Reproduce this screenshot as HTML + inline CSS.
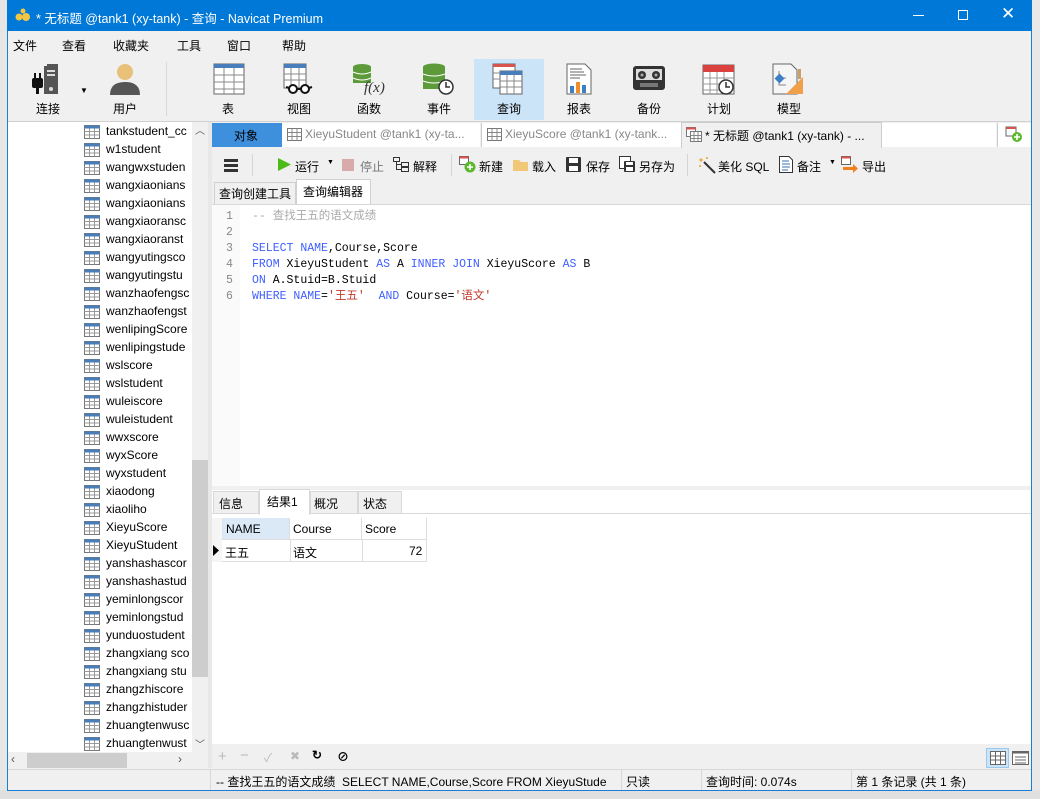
<!DOCTYPE html>
<html><head><meta charset="utf-8"><style>
*{margin:0;padding:0;box-sizing:border-box}
body{width:1040px;height:799px;overflow:hidden;background:#d8d8d8;font-family:"Liberation Sans","Noto Sans CJK SC",sans-serif;font-size:12px;color:#000;position:relative}
.a{position:absolute}
.ti{position:absolute;white-space:nowrap}
.tb{position:absolute;top:100px;width:70px;text-align:center;font-size:12px}
.ico{position:absolute}
.li{position:absolute;left:84px;height:18px;white-space:nowrap;font-size:12px}
.li svg{position:absolute;left:0;top:2px}
.li span{position:absolute;left:22px;top:1px}
.mono{font-family:"Liberation Mono","Noto Sans CJK SC",monospace;font-size:11.5px}
.k{color:#3f5fff}
.s{color:#c0392b}
</style></head><body>
<!-- outside bg strips -->
<div class="a" style="left:0;top:0;width:7px;height:799px;background:#e6e6e6"></div>
<div class="a" style="left:1032px;top:0;width:8px;height:799px;background:#e8e8e8"></div>
<div class="a" style="left:0;top:790px;width:1040px;height:9px;background:#e0e0e0"></div>
<!-- window -->
<div class="a" style="left:7px;top:0;width:1025px;height:791px;background:#f0f0f0;border:1px solid #1a7fd4"></div>
<div class="a" style="left:7px;top:0;width:1025px;height:31px;background:#0078d7"></div>
<svg class="ico" style="left:15px;top:8px" width="16" height="14"><circle cx="4" cy="9" r="3.5" fill="#f4c542"/><circle cx="11" cy="9" r="4" fill="#f4c542"/><circle cx="8" cy="3" r="2.5" fill="#f4c542"/></svg>
<div class="ti" style="left:36px;top:8px;color:#fff;font-size:12.5px">* 无标题 @tank1 (xy-tank) - 查询 - Navicat Premium</div>
<div class="a" style="left:913px;top:15px;width:11px;height:1px;background:#fff"></div>
<div class="a" style="left:958px;top:10px;width:10px;height:10px;border:1px solid #fff"></div>
<div class="ti" style="left:1001px;top:4px;color:#fff;font-size:17px">✕</div>
<!-- menu -->
<div class="ti" style="left:13px;top:37px">文件</div>
<div class="ti" style="left:62px;top:37px">查看</div>
<div class="ti" style="left:113px;top:37px">收藏夹</div>
<div class="ti" style="left:177px;top:37px">工具</div>
<div class="ti" style="left:227px;top:37px">窗口</div>
<div class="ti" style="left:282px;top:37px">帮助</div>
<!-- toolbar -->
<div class="a" style="left:474px;top:59px;width:70px;height:61px;background:#cce4f7"></div>
<div class="a" style="left:166px;top:62px;width:1px;height:54px;background:#d8d8d8"></div>
<svg class="ico" style="left:30px;top:62px" width="32" height="34"><rect x="14" y="4" width="14" height="28" fill="#555"/><rect x="17" y="2" width="11" height="2" fill="#555"/><rect x="17" y="8" width="8" height="2" fill="#ddd"/><rect x="17" y="12" width="8" height="2" fill="#ddd"/><circle cx="21" cy="27" r="2" fill="#ddd"/><rect x="2" y="16" width="11" height="10" rx="2" fill="#111"/><rect x="4" y="11" width="2" height="5" fill="#111"/><rect x="9" y="11" width="2" height="5" fill="#111"/><rect x="6" y="26" width="3" height="6" fill="#111"/></svg>
<div class="ti" style="left:80px;top:86px;font-size:8px">▼</div>
<div class="tb" style="left:13px">连接</div>
<svg class="ico" style="left:108px;top:62px" width="34" height="34"><circle cx="17" cy="10" r="8" fill="#e8c07a"/><path d="M2 33 Q2 20 17 20 Q32 20 32 33Z" fill="#555"/></svg>
<div class="tb" style="left:90px">用户</div>
<svg class="ico" style="left:213px;top:63px" width="32" height="32"><rect x="1" y="1" width="30" height="30" fill="#fff" stroke="#666"/><rect x="1" y="1" width="30" height="4" fill="#4a7ebb"/><path d="M1 12H31M1 19H31M1 26H31M11 5V31M21 5V31" stroke="#888"/></svg>
<div class="tb" style="left:193px">表</div>
<svg class="ico" style="left:283px;top:63px" width="32" height="32"><rect x="1" y="1" width="22" height="24" fill="#fff" stroke="#666"/><rect x="1" y="1" width="22" height="4" fill="#4a7ebb"/><path d="M1 11H23M1 17H23M8 5V25M16 5V25" stroke="#888"/><circle cx="10" cy="26" r="4" fill="#fff" stroke="#111" stroke-width="2"/><circle cx="22" cy="26" r="4" fill="#fff" stroke="#111" stroke-width="2"/><path d="M14 26H18M3 24L6 25M29 24L26 25" stroke="#111" stroke-width="2"/></svg>
<div class="tb" style="left:264px">视图</div>
<svg class="ico" style="left:352px;top:63px" width="34" height="32"><ellipse cx="10" cy="4" rx="9" ry="3" fill="#5d9b3a"/><rect x="1" y="4" width="18" height="16" fill="#5d9b3a"/><path d="M1 9Q10 13 19 9M1 15Q10 19 19 15" stroke="#fff" fill="none"/><text x="12" y="29" font-family="Liberation Serif" font-style="italic" font-size="15" fill="#333">f(x)</text></svg>
<div class="tb" style="left:334px">函数</div>
<svg class="ico" style="left:422px;top:63px" width="34" height="32"><ellipse cx="12" cy="4" rx="11" ry="3.5" fill="#5d9b3a"/><rect x="1" y="4" width="22" height="22" fill="#5d9b3a"/><path d="M1 11Q12 15 23 11M1 18Q12 22 23 18" stroke="#fff" fill="none"/><circle cx="24" cy="24" r="7" fill="#fff" stroke="#333" stroke-width="1.5"/><path d="M24 19V24H28" stroke="#333" stroke-width="1.5" fill="none"/></svg>
<div class="tb" style="left:404px">事件</div>
<svg class="ico" style="left:492px;top:63px" width="32" height="32"><rect x="1" y="1" width="22" height="24" fill="#fff" stroke="#666"/><rect x="1" y="1" width="22" height="3" fill="#d9534f"/><rect x="8" y="8" width="22" height="23" fill="#fff" stroke="#666"/><rect x="8" y="8" width="22" height="4" fill="#4a7ebb"/><path d="M8 18H30M8 24H30M15 12V31M22 12V31M1 10H8M1 16H8" stroke="#888"/></svg>
<div class="tb" style="left:474px">查询</div>
<svg class="ico" style="left:566px;top:63px" width="26" height="32"><path d="M1 1H19L25 7V31H1Z" fill="#fff" stroke="#666"/><path d="M4 6H16M4 9H18M4 12H20M4 15H14" stroke="#666"/><rect x="4" y="23" width="4" height="7" fill="#3b7fc4"/><rect x="10" y="19" width="4" height="11" fill="#f08c2a"/><rect x="16" y="22" width="4" height="8" fill="#3b7fc4"/></svg>
<div class="tb" style="left:544px">报表</div>
<svg class="ico" style="left:632px;top:65px" width="34" height="26"><rect x="1" y="1" width="32" height="24" rx="3" fill="#333"/><rect x="4" y="4" width="26" height="11" fill="#ddd"/><circle cx="10" cy="10" r="4" fill="#333"/><circle cx="24" cy="10" r="4" fill="#333"/><circle cx="10" cy="10" r="1.5" fill="#aaa"/><circle cx="24" cy="10" r="1.5" fill="#aaa"/><rect x="8" y="18" width="18" height="4" fill="#777"/></svg>
<div class="tb" style="left:614px">备份</div>
<svg class="ico" style="left:702px;top:63px" width="34" height="32"><rect x="1" y="2" width="31" height="29" fill="#fff" stroke="#666"/><rect x="1" y="2" width="31" height="7" fill="#d9423e"/><path d="M1 15H32M1 21H32M1 27H32M8 9V31M15 9V31M22 9V31" stroke="#999"/><circle cx="24" cy="24" r="7" fill="#fff" stroke="#333" stroke-width="1.5"/><path d="M24 19V24H28" stroke="#333" stroke-width="1.5" fill="none"/></svg>
<div class="tb" style="left:684px">计划</div>
<svg class="ico" style="left:772px;top:63px" width="34" height="32"><path d="M1 1H19L25 7V31H1Z" fill="#f5f5f5" stroke="#666"/><path d="M7 8V22H14M7 15H14" stroke="#888" fill="none"/><rect x="4" y="12" width="7" height="7" transform="rotate(45 7.5 15.5)" fill="#3b7fc4"/><path d="M14 31L31 14V31Z" fill="#f0a04a"/><rect x="26" y="6" width="3" height="10" fill="#c9a06a"/></svg>
<div class="tb" style="left:754px">模型</div>
<div class="a" style="left:8px;top:121px;width:1023px;height:1px;background:#d0d0d0"></div>
<!-- left panel -->
<div class="a" style="left:8px;top:122px;width:200px;height:630px;background:#fff"></div>
<div class="a" style="left:192px;top:122px;width:16px;height:630px;background:#f0f0f0"></div>
<div class="a" style="left:192px;top:460px;width:16px;height:217px;background:#cdcdcd"></div>
<div class="ti" style="left:195px;top:122px;font-size:10px;color:#555">︿</div>
<div class="ti" style="left:195px;top:736px;font-size:10px;color:#555">﹀</div>
<div class="a" style="left:8px;top:752px;width:200px;height:17px;background:#f0f0f0"></div>
<div class="a" style="left:27px;top:753px;width:100px;height:15px;background:#cdcdcd"></div>
<div class="ti" style="left:11px;top:752px;color:#555">‹</div>
<div class="ti" style="left:178px;top:752px;color:#555">›</div>
<div class="a" style="left:8px;top:122px;width:184px;height:630px;overflow:hidden" id="lst"></div>
<!-- splitter -->
<div class="a" style="left:208px;top:122px;width:4px;height:646px;background:#e8e8e8"></div>
<!-- tab row -->
<div class="a" style="left:212px;top:122px;width:819px;height:26px;background:#f0f0f0"></div>
<div class="a" style="left:212px;top:123px;width:70px;height:24px;background:#3e8fdc"></div>
<div class="ti" style="left:234px;top:127px">对象</div>
<div class="a" style="left:282px;top:123px;width:198px;height:24px;background:#fff"></div>
<div class="ti" style="left:305px;top:127px;color:#888">XieyuStudent @tank1 (xy-ta...</div>
<div class="a" style="left:481px;top:123px;width:200px;height:24px;background:#fff;border-left:1px solid #ccc"></div>
<div class="ti" style="left:505px;top:127px;color:#888">XieyuScore @tank1 (xy-tank...</div>
<div class="a" style="left:681px;top:122px;width:201px;height:26px;background:#f0f0f0;border:1px solid #ccc;border-bottom:none"></div>
<div class="ti" style="left:705px;top:127px">* 无标题 @tank1 (xy-tank) - ...</div>
<div class="a" style="left:882px;top:123px;width:114px;height:24px;background:#fff"></div>
<div class="a" style="left:997px;top:123px;width:34px;height:24px;background:#fff;border-left:1px solid #ccc"></div>
<svg class="ico" style="left:1005px;top:126px" width="18" height="16"><rect x="1" y="1" width="10" height="9" fill="#fff" stroke="#666"/><rect x="1" y="1" width="10" height="2" fill="#d9534f"/><circle cx="12" cy="11" r="5" fill="#5cb82e"/><path d="M12 8V14M9 11H15" stroke="#fff" stroke-width="1.6"/></svg>
<!-- tab icons -->
<svg class="ico" style="left:287px;top:128px" width="15" height="13"><rect x=".5" y=".5" width="14" height="12" fill="#fff" stroke="#777"/><path d="M.5 4.5H14.5M.5 8.5H14.5M5 .5V12.5M10 .5V12.5" stroke="#888"/></svg>
<svg class="ico" style="left:487px;top:128px" width="15" height="13"><rect x=".5" y=".5" width="14" height="12" fill="#fff" stroke="#777"/><path d="M.5 4.5H14.5M.5 8.5H14.5M5 .5V12.5M10 .5V12.5" stroke="#888"/></svg>
<svg class="ico" style="left:686px;top:127px" width="16" height="15"><rect x=".5" y=".5" width="9" height="9" fill="#fff" stroke="#777"/><rect x=".5" y=".5" width="9" height="2" fill="#d9534f"/><rect x="4.5" y="4.5" width="11" height="10" fill="#fff" stroke="#777"/><path d="M4.5 8.5H15.5M4.5 11.5H15.5M8 4.5V14.5M12 4.5V14.5" stroke="#888"/></svg>
<!-- query toolbar -->
<div class="a" style="left:212px;top:148px;width:819px;height:57px;background:#f0f0f0"></div>
<div class="a" style="left:224px;top:159px;width:14px;height:2.5px;background:#333"></div>
<div class="a" style="left:224px;top:164px;width:14px;height:2.5px;background:#333"></div>
<div class="a" style="left:224px;top:169px;width:14px;height:2.5px;background:#333"></div>
<div class="a" style="left:252px;top:154px;width:1px;height:22px;background:#d5d5d5"></div>
<svg class="ico" style="left:278px;top:158px" width="13" height="13"><path d="M0 0L13 6.5L0 13Z" fill="#4cbb17"/></svg>
<div class="ti" style="left:295px;top:158px">运行</div>
<div class="ti" style="left:327px;top:159px;font-size:7px">▼</div>
<div class="a" style="left:342px;top:159px;width:12px;height:12px;background:#d9aaaa"></div>
<div class="ti" style="left:360px;top:158px;color:#777">停止</div>
<svg class="ico" style="left:393px;top:157px" width="16" height="15"><rect x=".5" y=".5" width="6" height="4" fill="none" stroke="#333"/><rect x="8.5" y="5.5" width="7" height="4" fill="none" stroke="#333"/><rect x="8.5" y="10.5" width="7" height="4" fill="none" stroke="#333"/><path d="M3.5 4.5V12.5H8.5M3.5 7.5H8.5" stroke="#333" fill="none"/></svg>
<div class="ti" style="left:413px;top:158px">解释</div>
<div class="a" style="left:451px;top:154px;width:1px;height:22px;background:#d5d5d5"></div>
<svg class="ico" style="left:459px;top:156px" width="18" height="17"><rect x=".5" y=".5" width="9" height="8" fill="#fff" stroke="#666"/><rect x=".5" y=".5" width="9" height="2" fill="#d9534f"/><circle cx="11" cy="11" r="5.5" fill="#5cb82e"/><path d="M11 8V14M8 11H14" stroke="#fff" stroke-width="1.6"/></svg>
<div class="ti" style="left:479px;top:158px">新建</div>
<svg class="ico" style="left:513px;top:158px" width="16" height="13"><path d="M0 2H6L8 4H15V13H0Z" fill="#f0c878"/></svg>
<div class="ti" style="left:532px;top:158px">载入</div>
<svg class="ico" style="left:566px;top:157px" width="15" height="15"><rect x="0" y="0" width="15" height="15" rx="1" fill="#333"/><rect x="3" y="1" width="9" height="5" fill="#fff"/><rect x="3" y="9" width="9" height="5" fill="#fff"/></svg>
<div class="ti" style="left:586px;top:158px">保存</div>
<svg class="ico" style="left:619px;top:156px" width="17" height="17"><rect x=".5" y=".5" width="11" height="12" fill="#fff" stroke="#333"/><rect x="5" y="5" width="11" height="11" rx="1" fill="#333"/><rect x="7" y="6" width="7" height="3" fill="#fff"/><rect x="7" y="11" width="7" height="4" fill="#fff"/></svg>
<div class="ti" style="left:639px;top:158px">另存为</div>
<div class="a" style="left:687px;top:154px;width:1px;height:22px;background:#d5d5d5"></div>
<svg class="ico" style="left:698px;top:156px" width="18" height="18"><path d="M6 6L17 17" stroke="#333" stroke-width="2"/><path d="M3 2V6M1 4H5M9 1V3M8 2H10M1 10H3M2 9V11" stroke="#e8a020" stroke-width="1"/></svg>
<div class="ti" style="left:718px;top:158px">美化 SQL</div>
<svg class="ico" style="left:779px;top:156px" width="14" height="17"><path d="M.5 .5H10L13.5 4V16.5H.5Z" fill="#fff" stroke="#333"/><path d="M3 5H10M3 8H11M3 11H11M3 14H9" stroke="#3b6fb0"/></svg>
<div class="ti" style="left:797px;top:158px">备注</div>
<div class="ti" style="left:829px;top:159px;font-size:7px">▼</div>
<svg class="ico" style="left:841px;top:156px" width="18" height="17"><rect x=".5" y=".5" width="9" height="8" fill="#fff" stroke="#666"/><rect x=".5" y=".5" width="9" height="2" fill="#d9534f"/><path d="M2 11H12V8L17 12.5L12 17V14H2Z" fill="#f08020"/></svg>
<div class="ti" style="left:862px;top:158px">导出</div>
<!-- sub tabs -->
<div class="a" style="left:214px;top:182px;width:82px;height:23px;border:1px solid #d0d0d0;border-bottom:none;background:#f0f0f0"></div>
<div class="ti" style="left:219px;top:185px">查询创建工具</div>
<div class="a" style="left:296px;top:179px;width:75px;height:26px;border:1px solid #d0d0d0;border-bottom:none;background:#fff"></div>
<div class="ti" style="left:303px;top:183px">查询编辑器</div>
<!-- editor -->
<div class="a" style="left:212px;top:204px;width:819px;height:282px;background:#fff;border-top:1px solid #d8d8d8"></div>
<div class="a" style="left:212px;top:205px;width:28px;height:281px;background:#fafafa"></div>
<div class="a mono" style="left:226px;top:209px;line-height:16px;color:#888">1<br>2<br>3<br>4<br>5<br>6</div>
<div class="a mono" style="left:252px;top:209px;line-height:16px;white-space:pre"><span style="color:#aaa">-- 查找王五的语文成绩</span>

<span class="k">SELECT</span> <span class="k">NAME</span>,Course,Score
<span class="k">FROM</span> XieyuStudent <span class="k">AS</span> A <span class="k">INNER</span> <span class="k">JOIN</span> XieyuScore <span class="k">AS</span> B
<span class="k">ON</span> A.Stuid=B.Stuid
<span class="k">WHERE</span> <span class="k">NAME</span>=<span class="s">'王五'</span>  <span class="k">AND</span> Course=<span class="s">'语文'</span></div>
<!-- results -->
<div class="a" style="left:212px;top:486px;width:819px;height:4px;background:#f0f0f0"></div>
<div class="a" style="left:212px;top:490px;width:819px;height:254px;background:#fff"></div>
<div class="a" style="left:212px;top:490px;width:819px;height:24px;background:#fff;border-bottom:1px solid #d8d8d8"></div>
<div class="a" style="left:213px;top:491px;width:46px;height:23px;background:#f0f0f0;border:1px solid #d8d8d8"></div>
<div class="ti" style="left:219px;top:495px">信息</div>
<div class="a" style="left:259px;top:489px;width:51px;height:26px;background:#fff;border:1px solid #d8d8d8;border-bottom:none"></div>
<div class="ti" style="left:267px;top:493px">结果1</div>
<div class="a" style="left:310px;top:491px;width:48px;height:23px;background:#f0f0f0;border:1px solid #d8d8d8"></div>
<div class="ti" style="left:314px;top:495px">概况</div>
<div class="a" style="left:358px;top:491px;width:44px;height:23px;background:#f0f0f0;border:1px solid #d8d8d8"></div>
<div class="ti" style="left:363px;top:495px">状态</div>
<!-- grid -->
<div class="a" style="left:212px;top:518px;width:10px;height:44px;background:#f5f5f5"></div>
<div class="a" style="left:222px;top:518px;width:68px;height:22px;background:#dbe9f7;border-right:1px solid #ddd;border-bottom:1px solid #ddd"></div>
<div class="a" style="left:290px;top:518px;width:72px;height:22px;background:#fff;border-right:1px solid #ddd;border-bottom:1px solid #ddd"></div>
<div class="a" style="left:362px;top:518px;width:65px;height:22px;background:#fff;border-right:1px solid #ddd;border-bottom:1px solid #ddd"></div>
<div class="ti" style="left:226px;top:522px">NAME</div>
<div class="ti" style="left:293px;top:522px">Course</div>
<div class="ti" style="left:365px;top:522px">Score</div>
<div class="a" style="left:222px;top:540px;width:205px;height:22px;border-bottom:1px solid #ddd"></div>
<div class="a" style="left:290px;top:540px;width:1px;height:22px;background:#ddd"></div>
<div class="a" style="left:362px;top:540px;width:1px;height:22px;background:#ddd"></div>
<div class="a" style="left:426px;top:540px;width:1px;height:22px;background:#ddd"></div>
<svg class="ico" style="left:213px;top:545px" width="6" height="11"><path d="M0 0L6 5.5L0 11Z" fill="#000"/></svg>
<div class="ti" style="left:225px;top:544px">王五</div>
<div class="ti" style="left:293px;top:544px">语文</div>
<div class="ti" style="left:409px;top:544px">72</div>
<!-- bottom tools -->
<div class="a" style="left:212px;top:744px;width:819px;height:26px;background:#f0f0f0"></div>
<div class="ti" style="left:218px;top:748px;color:#bbb;font-size:15px">+</div>
<div class="ti" style="left:240px;top:747px;color:#bbb;font-size:15px">−</div>
<div class="ti" style="left:264px;top:749px;color:#bbb">✓</div>
<div class="ti" style="left:290px;top:749px;color:#bbb">✖</div>
<div class="ti" style="left:312px;top:748px;font-weight:bold">↻</div>
<div class="ti" style="left:337px;top:748px;font-weight:bold">⊘</div>
<div class="a" style="left:986px;top:748px;width:23px;height:20px;background:#cce4f7;border:1px solid #99c9ef"></div>
<svg class="ico" style="left:990px;top:751px" width="16" height="14"><rect x=".5" y=".5" width="15" height="13" fill="#fff" stroke="#666"/><path d="M.5 5H15.5M.5 9H15.5M5.5 .5V13.5M10.5 .5V13.5" stroke="#666"/></svg>
<svg class="ico" style="left:1012px;top:751px" width="17" height="14"><rect x=".5" y=".5" width="16" height="13" fill="#fff" stroke="#666"/><rect x=".5" y=".5" width="16" height="2" fill="#666"/><path d="M3 6H14M3 9H14M3 12H14" stroke="#666"/></svg>
<!-- status bar -->
<div class="a" style="left:8px;top:769px;width:1023px;height:21px;background:#f0f0f0;border-top:1px solid #d8d8d8"></div>
<div class="a" style="left:210px;top:770px;width:1px;height:20px;background:#d8d8d8"></div>
<div class="a" style="left:621px;top:770px;width:1px;height:20px;background:#d8d8d8"></div>
<div class="a" style="left:701px;top:770px;width:1px;height:20px;background:#d8d8d8"></div>
<div class="a" style="left:851px;top:770px;width:1px;height:20px;background:#d8d8d8"></div>
<div class="ti" style="left:216px;top:773px">-- 查找王五的语文成绩&nbsp; SELECT NAME,Course,Score FROM XieyuStude</div>
<div class="ti" style="left:626px;top:773px">只读</div>
<div class="ti" style="left:706px;top:773px">查询时间: 0.074s</div>
<div class="ti" style="left:856px;top:773px">第 1 条记录 (共 1 条)</div>
<script>
var n=["tankstudent_cc","w1student","wangwxstuden","wangxiaonians","wangxiaonians","wangxiaoransc","wangxiaoranst","wangyutingsco","wangyutingstu","wanzhaofengsc","wanzhaofengst","wenlipingScore","wenlipingstude","wslscore","wslstudent","wuleiscore","wuleistudent","wwxscore","wyxScore","wyxstudent","xiaodong","xiaoliho","XieyuScore","XieyuStudent","yanshashascor","yanshashastud","yeminlongscor","yeminlongstud","yunduostudent","zhangxiang sco","zhangxiang stu","zhangzhiscore","zhangzhistuder","zhuangtenwusc","zhuangtenwust"];
var h="",ic='<svg width="16" height="14"><rect x=".5" y=".5" width="15" height="13" fill="#fff" stroke="#777"/><rect x=".5" y=".5" width="15" height="3" fill="#4a7ebb"/><path d="M.5 6.5H15.5M.5 10H15.5M5.5 3.5V13.5M10.5 3.5V13.5" stroke="#999"/></svg>';
for(var i=0;i<n.length;i++){h+='<div class="li" style="left:76px;top:'+(1+i*18)+'px">'+ic+'<span>'+n[i]+'</span></div>';}
document.getElementById("lst").innerHTML=h;
</script>
</body></html>
